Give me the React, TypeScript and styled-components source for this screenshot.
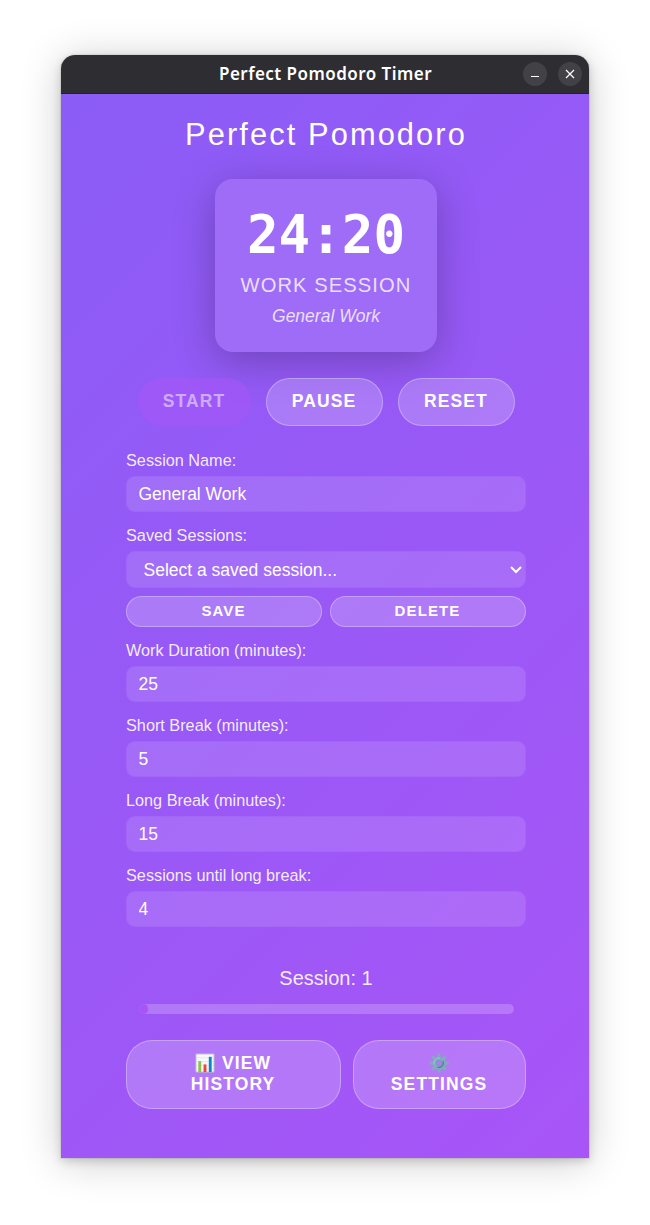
import React from 'react';
import styled, { createGlobalStyle, css } from 'styled-components';

const GlobalStyle = createGlobalStyle`
  * { box-sizing: border-box; }
  body { margin: 0; background: #fff; font-family: 'Liberation Sans', Arial, sans-serif; }
`;

const Desktop = styled.div`
  width: 650px;
  height: 1225px;
  padding: 55px 61px 0;
  overflow: hidden;
`;

const Window = styled.main`
  width: 528px;
  height: 1103px;
  display: flex;
  flex-direction: column;
  border-radius: 14px 14px 0 0;
  box-shadow: 0 0 0 1px rgba(0, 0, 0, 0.06), 0 3px 10px rgba(0, 0, 0, 0.17), 0 4px 42px rgba(0, 0, 0, 0.2);
`;

const TitleBar = styled.header`
  display: grid;
  grid-template-columns: 1fr auto 1fr;
  align-items: center;
  height: 39px;
  flex: none;
  padding: 0 7px 2px 8px;
  border-radius: 14px 14px 0 0;
  background: #2e2d32;
  box-shadow: inset 0 -1px #232227;
`;

const WindowTitle = styled.div`
  grid-column: 2;
  color: #fff;
  font: 600 17px/24px 'Noto Sans', 'Open Sans', sans-serif;
  letter-spacing: 0.46px;
  white-space: nowrap;
`;

const WindowControls = styled.div`
  display: flex;
  justify-content: flex-end;
  gap: 11px;
`;

const WindowButton = styled.button`
  display: grid;
  place-items: center;
  width: 24px;
  height: 24px;
  padding: 0;
  border: 0;
  border-radius: 50%;
  background: #424146;
  color: #fff;
`;

const Content = styled.div`
  flex: 1;
  display: flex;
  flex-direction: column;
  padding: 23px 63px 0 65px;
  background: linear-gradient(135deg, #8b5cf6, #a855f7);
  color: #fff;
`;

const Heading = styled.h1`
  margin: 0;
  text-align: center;
  font-size: 30.8px;
  font-weight: 400;
  line-height: 36px;
  letter-spacing: 2.1px;
`;

const TimerCard = styled.section`
  display: flex;
  flex-direction: column;
  align-items: center;
  align-self: center;
  width: 222px;
  height: 173px;
  margin-top: 26px;
  padding-top: 25px;
  border-radius: 18px;
  background: #9f6cf8;
  box-shadow: 0 9px 40px rgba(0, 0, 0, 0.25);
`;

const Clock = styled.div`
  font: 700 52.5px/61px 'DejaVu Sans Mono', monospace;
`;

const Mode = styled.div`
  margin-top: 8px;
  font-size: 20.2px;
  line-height: 24px;
  letter-spacing: 1.05px;
  color: rgba(255, 255, 255, 0.8);
`;

const Task = styled.div`
  margin-top: 9px;
  font-size: 17.5px;
  font-style: italic;
  line-height: 20px;
  color: rgba(255, 255, 255, 0.8);
`;

const Actions = styled.div`
  display: flex;
  gap: 15px;
  margin: 26px 0 0 12px;
`;

const pill = css`
  padding: 0 1px 2px 0;
  border: 1px solid rgba(255, 255, 255, 0.3);
  background: rgba(255, 255, 255, 0.2);
  color: #fff;
  font-family: inherit;
  font-weight: 700;
  letter-spacing: 1.1px;
`;

const ActionButton = styled.button<{ $primary?: boolean }>`
  ${pill}
  width: 117px;
  height: 48px;
  border-radius: 24px;
  font-size: 17.5px;
  ${({ $primary }) => $primary && css`
    width: 113px;
    border: 0;
    background: rgba(168, 85, 247, 0.5);
    color: rgba(255, 255, 255, 0.5);
  `}
`;

const Form = styled.form`
  display: flex;
  flex-direction: column;
  gap: 13px;
  margin-top: 24px;
`;

const Field = styled.div`
  display: flex;
  flex-direction: column;
`;

const Label = styled.label`
  height: 26px;
  font-size: 16.25px;
  line-height: 21px;
  color: rgba(255, 255, 255, 0.9);
`;

const control = css`
  width: 100%;
  height: 36px;
  border: 1px solid rgba(159, 88, 247, 0.3);
  border-radius: 9px;
  outline: 0;
  background: rgba(255, 255, 255, 0.12);
  color: #fff;
  font: 17.5px 'Liberation Sans', Arial, sans-serif;
`;

const Input = styled.input`
  ${control}
  padding: 1px 11.5px 0;
`;

const Select = styled.button`
  ${control}
  display: flex;
  align-items: center;
  justify-content: space-between;
  height: 37px;
  padding: 1px 3px 0 16.5px;
  text-align: left;
`;

const SaveRow = styled.div`
  display: grid;
  grid-template-columns: 1fr 1fr;
  gap: 8px;
  margin-top: 8px;
`;

const SmallButton = styled.button`
  ${pill}
  height: 31px;
  border-radius: 16px;
  font-size: 15px;
`;

const SessionCount = styled.div`
  margin-top: 39px;
  text-align: center;
  font-size: 20px;
  line-height: 24px;
  color: rgba(255, 255, 255, 0.9);
`;

const Track = styled.div`
  height: 10px;
  margin: 14px 12px 0 13px;
  border-radius: 5px;
  overflow: hidden;
  background: rgba(255, 255, 255, 0.2);
`;

const Progress = styled.div`
  height: 100%;
  border-radius: 5px;
  background: #a855f7;
`;

const Footer = styled.footer`
  display: grid;
  grid-template-columns: 215px 173px;
  gap: 12px;
  margin-top: 26px;
`;

const FooterButton = styled.button`
  ${pill}
  display: flex;
  flex-direction: column;
  align-items: center;
  justify-content: center;
  height: 69px;
  border-radius: 26px;
  font-size: 17.5px;
  line-height: 21px;
`;

const ButtonLine = styled.span`
  display: flex;
  align-items: center;
  justify-content: center;
  gap: 7px;
  height: 21px;
`;

function ChartIcon() {
  return (
    <svg width="20" height="20" viewBox="0 0 21 21">
      <path fill="#f8f8fa" stroke="#b9bac2" d="M1 1h19v19H1z" />
      <path stroke="#d9dde2" strokeWidth=".6" d="M1.5 5h18M1.5 9h18M1.5 13h18M1.5 17h18" />
      <path fill="#8bc34a" d="M3.5 8.5h3V20h-3z" />
      <path fill="#f44336" d="M9 12h3v8H9z" />
      <path fill="#0288d1" d="M14.5 4h3v16h-3z" />
    </svg>
  );
}

function GearIcon() {
  return (
    <svg width="20" height="20" viewBox="0 0 20 20">
      <g fill="#82aabe">
        {[0, 45, 90, 135].map((angle) => (
          <path key={angle} transform={`rotate(${angle} 10 10)`} d="M8.6.4h2.8l.4 4v11.2l-.4 4H8.6l-.4-4V4.4z" />
        ))}
        <circle cx="10" cy="10" r="6.6" />
      </g>
      <path fill="none" stroke="#a2c4d0" strokeWidth="1" d="M5.2 11.5A5 5 0 0 1 11 5.1" />
      <path fill="none" stroke="#467f96" strokeWidth="1.3" d="M14 8.3A4.4 4.4 0 0 1 8.7 14.2" />
      <circle cx="10" cy="10" r="2.7" fill="#b17bf8" stroke="#679caf" strokeWidth=".6" />
    </svg>
  );
}

const durations = [
  ['Work Duration (minutes):', '25'],
  ['Short Break (minutes):', '5'],
  ['Long Break (minutes):', '15'],
  ['Sessions until long break:', '4'],
];

export default function App() {
  return (
    <Desktop>
      <GlobalStyle />
      <Window>
        <TitleBar>
          <WindowTitle>Perfect Pomodoro Timer</WindowTitle>
          <WindowControls>
            <WindowButton aria-label="Minimize">
              <svg width="10" height="10" viewBox="0 0 10 10" stroke="currentColor"><path d="M1 7.5h8" /></svg>
            </WindowButton>
            <WindowButton aria-label="Close">
              <svg width="10" height="10" viewBox="0 0 10 10" stroke="currentColor" strokeWidth="1.2"><path d="m1 1 8 8M9 1 1 9" /></svg>
            </WindowButton>
          </WindowControls>
        </TitleBar>
        <Content>
          <Heading>Perfect Pomodoro</Heading>
          <TimerCard>
            <Clock>24:20</Clock>
            <Mode>WORK SESSION</Mode>
            <Task>General Work</Task>
          </TimerCard>
          <Actions>
            <ActionButton $primary disabled>START</ActionButton>
            <ActionButton>PAUSE</ActionButton>
            <ActionButton>RESET</ActionButton>
          </Actions>
          <Form>
            <Field>
              <Label>Session Name:</Label>
              <Input defaultValue="General Work" />
            </Field>
            <Field>
              <Label>Saved Sessions:</Label>
              <Select type="button">
                Select a saved session...
                <svg width="12" height="8" viewBox="0 0 12 8" fill="none" stroke="currentColor" strokeWidth="2"><path d="m1 1 5 5 5-5" /></svg>
              </Select>
              <SaveRow>
                <SmallButton type="button">SAVE</SmallButton>
                <SmallButton type="button">DELETE</SmallButton>
              </SaveRow>
            </Field>
            {durations.map(([label, value]) => (
              <Field key={label}>
                <Label>{label}</Label>
                <Input defaultValue={value} />
              </Field>
            ))}
          </Form>
          <SessionCount>Session: 1</SessionCount>
          <Track><Progress style={{ width: '2.4%' }} /></Track>
          <Footer>
            <FooterButton>
              <ButtonLine><ChartIcon />VIEW</ButtonLine>
              <ButtonLine>HISTORY</ButtonLine>
            </FooterButton>
            <FooterButton>
              <ButtonLine><GearIcon /></ButtonLine>
              <ButtonLine>SETTINGS</ButtonLine>
            </FooterButton>
          </Footer>
        </Content>
      </Window>
    </Desktop>
  );
}
